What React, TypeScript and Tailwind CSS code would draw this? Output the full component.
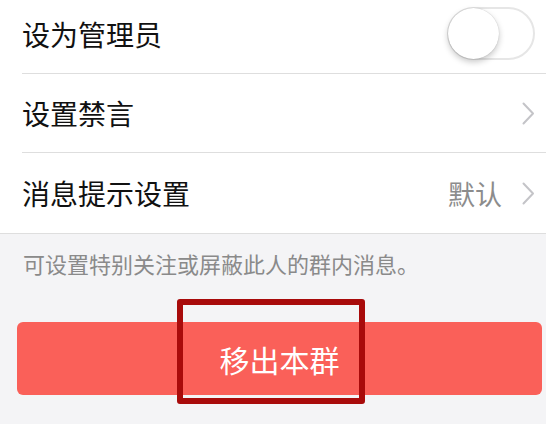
import type { ReactNode } from "react";

function Chevron(): JSX.Element {
  return (
    <svg width="13" height="23" viewBox="0 0 13 23" fill="none" aria-hidden>
      <path d="M1.5 1.5 L11 11.5 L1.5 21.5" stroke="#c4c4c8" strokeWidth="2" strokeLinecap="round" strokeLinejoin="round" />
    </svg>
  );
}

function Toggle(): JSX.Element {
  return (
    <div className="flex h-[53px] w-[88px] items-center rounded-full border-2 border-[#e6e6e6] bg-white">
      <div className="-ml-[1px] h-[51px] w-[51px] rounded-full bg-white shadow-[0_3px_6px_rgba(0,0,0,0.22),0_0_1px_rgba(0,0,0,0.25)]" />
    </div>
  );
}

function Row({
  label,
  right,
  height,
  inset = true,
}: {
  label: string;
  right: ReactNode;
  height: string;
  inset?: boolean;
}): JSX.Element {
  return (
    <div className={inset ? "pl-[22px]" : "border-b border-[#dedede] pl-[22px]"}>
      <div
        className={`flex items-center justify-between pr-[11px] ${height} ${inset ? "border-b border-[#dedede]" : ""}`}
      >
        <span className="text-[28px] leading-none text-[#111]">{label}</span>
        {right}
      </div>
    </div>
  );
}

export default function App(): JSX.Element {
  return (
    <div
      className="relative flex h-[424px] w-[546px] flex-col overflow-hidden bg-[#f4f4f6]"
      style={{ fontFamily: '"Noto Sans CJK SC", "Noto Sans", sans-serif' }}
    >
      <div className="bg-white">
        <Row label="设为管理员" height="h-[74px] pb-[6px]" right={<Toggle />} />
        <Row label="设置禁言" height="h-[79px]" right={<Chevron />} />
        <Row
          label="消息提示设置"
          height="h-[80px]"
          inset={false}
          right={
            <div className="flex items-center gap-[20px]">
              <span className="text-[27px] leading-none text-[#8c8c8c]">默认</span>
              <Chevron />
            </div>
          }
        />
      </div>
      <p className="pl-[23px] pt-[18px] text-[22px] leading-none text-[#8a8a8a]">
        可设置特别关注或屏蔽此人的群内消息。
      </p>
      <div className="pl-[17px] pr-[4px] pt-[48px]">
        <button
          type="button"
          className="flex h-[73px] w-full items-center justify-center rounded-[6px] bg-[#fa6059] text-[30px] leading-none text-white"
        >
          移出本群
        </button>
      </div>
      <div className="absolute left-[177px] top-[299px] h-[105px] w-[188px] rounded-[3px] border-[6px] border-[#a80b0b]" />
    </div>
  );
}
